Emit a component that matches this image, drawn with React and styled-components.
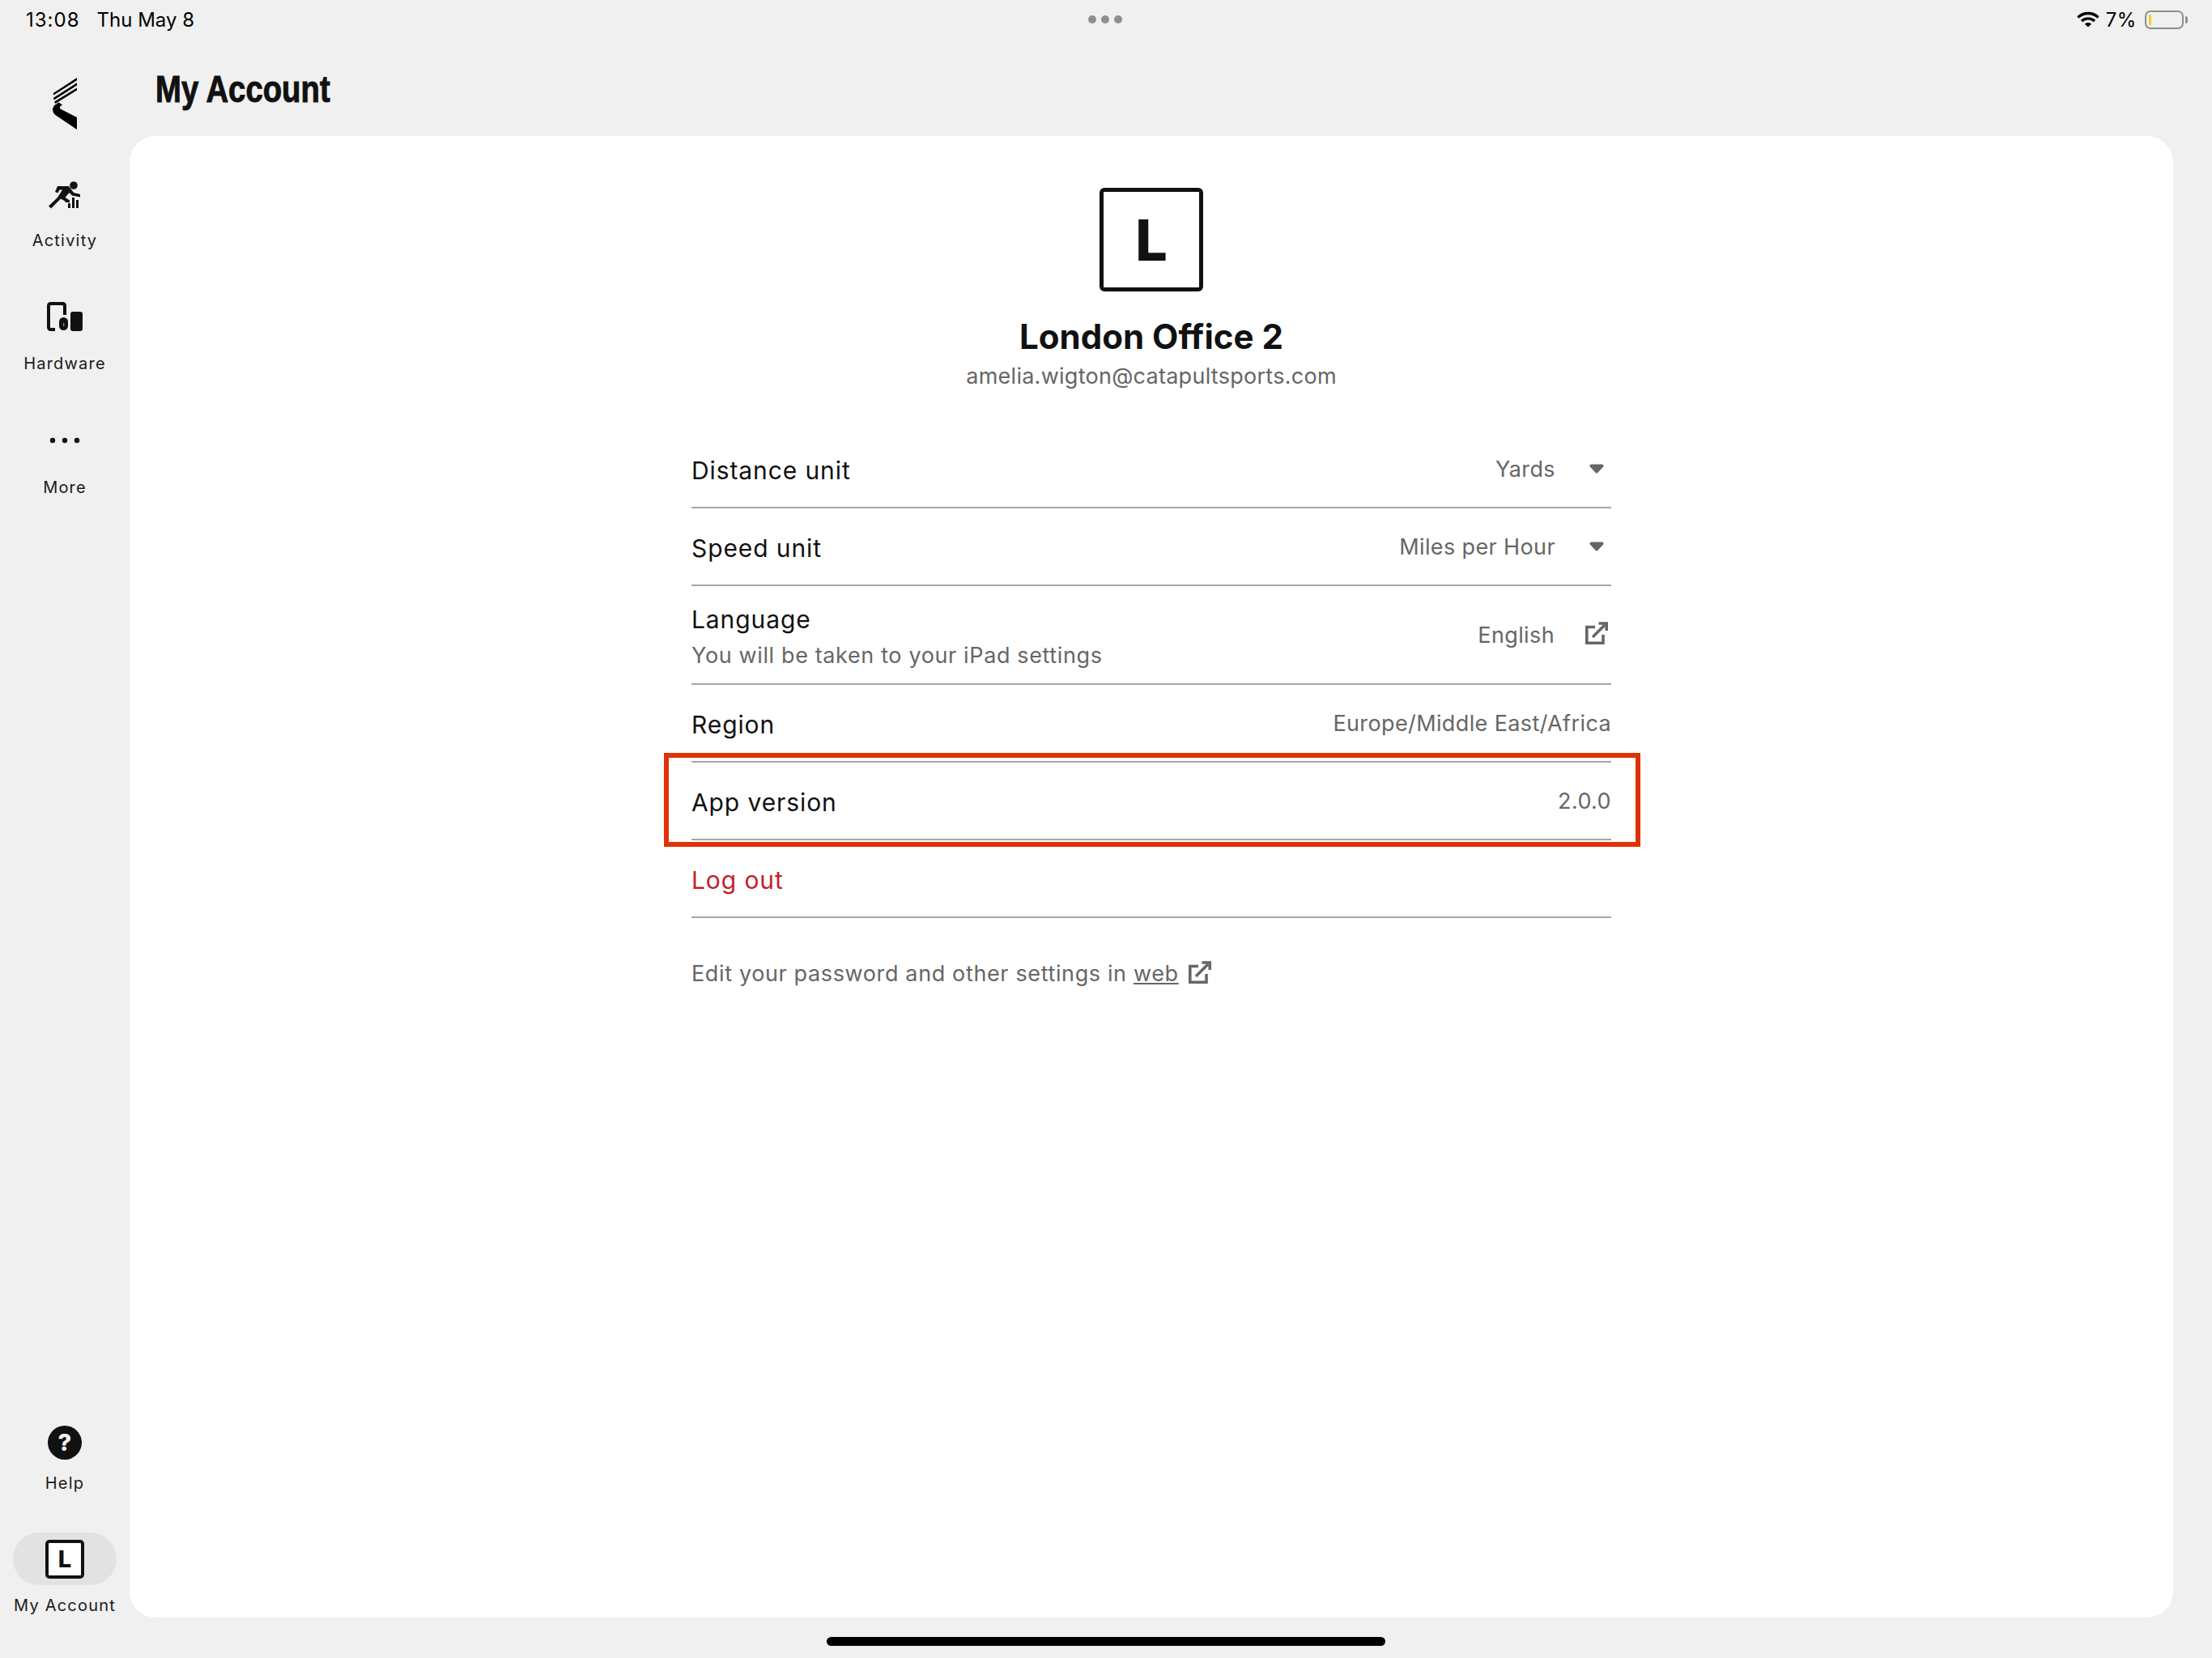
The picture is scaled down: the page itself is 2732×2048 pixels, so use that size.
import React from 'react'
import styled, { createGlobalStyle } from 'styled-components'

const GlobalStyle = createGlobalStyle`
  html, body {
    margin: 0;
    width: 2732px;
    height: 2048px;
    overflow: hidden;
    background: #f0f0f0;
    font-family: Inter, "Liberation Sans", sans-serif;
    color: #111;
  }
`

const Screen = styled.div`
  width: 2732px;
  height: 2048px;
  display: flex;
  flex-direction: column;
  background: #f0f0f0;
`

const StatusBar = styled.div`
  height: 48px;
  flex: none;
  display: grid;
  grid-template-columns: 1fr auto 1fr;
  align-items: center;
  padding: 0 35px 0 32px;
  font-size: 24px;
  color: #000;
`

const StatusLeft = styled.div`
  display: flex;
  gap: 21px;
`

const Clock = styled.span`
  letter-spacing: 1px;
`

const MultitaskDots = styled.div`
  display: flex;
  gap: 6px;
  span {
    width: 10px;
    height: 10px;
    border-radius: 50%;
    background: #8e8e8e;
  }
`

const StatusRight = styled.div`
  display: flex;
  justify-content: flex-end;
  align-items: center;
  gap: 8px;
  letter-spacing: 0.6px;
`

const Battery = styled.div`
  position: relative;
  width: 48px;
  height: 23px;
  margin-left: 2px;
  box-sizing: border-box;
  border: 2px solid #8e8e8e;
  border-radius: 7px;
  &::before {
    content: '';
    position: absolute;
    left: 3px;
    top: 3px;
    width: 3px;
    height: 13px;
    background: #f5cd2a;
    border-radius: 1px;
  }
  &::after {
    content: '';
    position: absolute;
    right: -7px;
    top: 5px;
    width: 3px;
    height: 9px;
    background: #8e8e8e;
    border-radius: 0 3px 3px 0;
  }
`

const Body = styled.div`
  flex: 1;
  display: flex;
  min-height: 0;
`

const Sidebar = styled.nav`
  width: 160px;
  flex: none;
  display: flex;
  flex-direction: column;
  justify-content: space-between;
`

const NavGroup = styled.div`
  display: flex;
  flex-direction: column;
`

const Logo = styled.svg`
  display: block;
  width: 30px;
  height: 64px;
  margin: 48px 0 60px 65px;
`

const NavItem = styled.div`
  height: ${p => p.$height || 152}px;
  display: flex;
  flex-direction: column;
  align-items: center;
`

const NavIcon = styled.div`
  height: ${p => p.$height || 48}px;
  margin-top: ${p => p.$top || 0}px;
  display: flex;
  align-items: center;
  justify-content: center;
`

const NavLabel = styled.span`
  font-size: 20px;
  line-height: 24px;
  letter-spacing: 1.2px;
  margin-top: ${p => p.$gap || 0}px;
  color: #1a1a1a;
  white-space: nowrap;
`

const Pill = styled.div`
  width: 128px;
  height: 65px;
  flex: none;
  border-radius: 33px;
  background: #e2e2e2;
  display: flex;
  align-items: center;
  justify-content: center;
`

const HelpBadge = styled.div`
  width: 42px;
  height: 42px;
  border-radius: 50%;
  background: #111;
  color: #f0f0f0;
  font-size: 29px;
  font-weight: 800;
  line-height: 42px;
  text-align: center;
`

const AvatarBox = styled.div`
  width: ${p => p.$size}px;
  height: ${p => p.$size}px;
  box-sizing: border-box;
  flex: none;
  border: ${p => p.$border}px solid #111;
  border-radius: ${p => p.$radius}px;
  background: #fff;
  display: flex;
  align-items: center;
  justify-content: center;
  font-size: ${p => p.$font}px;
  font-weight: 800;
  color: #111;
`

const Main = styled.main`
  flex: 1;
  display: flex;
  flex-direction: column;
  padding-right: 48px;
  min-width: 0;
`

const PageTitle = styled.h1`
  height: 120px;
  margin: 0;
  padding: 38px 0 0 32px;
  box-sizing: border-box;
  font-family: "Liberation Sans", sans-serif;
  font-size: 47px;
  line-height: 48px;
  font-weight: 700;
  color: #111;
  -webkit-text-stroke: 1px #111;
  transform: scaleX(0.815);
  transform-origin: 32px 0;
  white-space: nowrap;
`

const Card = styled.section`
  height: 1830px;
  background: #fff;
  border-radius: 32px;
  display: flex;
  flex-direction: column;
  align-items: center;
  padding-top: 64px;
  box-sizing: border-box;
`

const OrgName = styled.h2`
  margin: 27px 0 0;
  font-size: 42px;
  line-height: 58px;
  font-weight: 700;
  color: #111;
`

const Email = styled.div`
  font-size: 27px;
  line-height: 36px;
  letter-spacing: 0.27px;
  color: #666;
  margin-top: 2px;
`

const List = styled.div`
  width: 1136px;
  margin-top: 49px;
`

const Row = styled.div`
  position: relative;
  height: ${p => p.$height || 96}px;
  box-sizing: border-box;
  border-bottom: 2px solid #a6a6a6;
  display: flex;
  align-items: center;
  justify-content: space-between;
`

const Highlight = styled.div`
  position: absolute;
  left: -34px;
  right: -36px;
  top: -12px;
  bottom: -10px;
  border: 6px solid #e03108;
  pointer-events: none;
`

const LabelStack = styled.div`
  display: flex;
  flex-direction: column;
  gap: 8px;
  padding-top: 2px;
`

const Label = styled.div`
  padding-top: 3px;
  font-size: 30px;
  line-height: 38px;
  letter-spacing: 0.9px;
  color: ${p => (p.$danger ? '#c41e2a' : '#111')};
`

const SubLabel = styled.div`
  font-size: 27px;
  line-height: 36px;
  letter-spacing: 0.63px;
  color: #666;
`

const Value = styled.div`
  display: flex;
  align-items: center;
  gap: ${p => p.$gap || 0}px;
  font-size: 27px;
  letter-spacing: 0.38px;
  color: #666;
`

const Caret = styled.svg`
  display: block;
  width: 18px;
  height: 12px;
  margin-right: 9px;
`

const LinkIcon = styled.svg`
  display: block;
  width: 28px;
  height: 28px;
  margin: 0 4px 5px 0;
`

const Note = styled.div`
  width: 1136px;
  display: flex;
  align-items: center;
  gap: 12px;
  margin-top: 50px;
  font-size: 27px;
  line-height: 38px;
  letter-spacing: 0.63px;
  color: #666;
  a {
    color: inherit;
    text-decoration: underline;
  }
`

const HomeArea = styled.div`
  height: 50px;
  flex: none;
  display: flex;
  justify-content: center;
  padding-top: 24px;
  box-sizing: border-box;
`

const HomeBar = styled.div`
  width: 690px;
  height: 11px;
  border-radius: 6px;
  background: #000;
`

const Wifi = () => (
  <svg width="28" height="20" viewBox="0 0 28 20" fill="none" stroke="#000" strokeWidth="3.4" style={{ display: 'block' }}>
    <path d="M1.5 7.5 C8.5 0.8 19.5 0.8 26.5 7.5" />
    <path d="M6 12 C10.5 7.8 17.5 7.8 22 12" />
    <path d="M14 19.5 L9.8 15.5 C12.2 13.4 15.8 13.4 18.2 15.5 Z" fill="#000" stroke="none" />
  </svg>
)

const Catapult = () => (
  <Logo viewBox="0 0 30 64" fill="#000">
    <path d="M30 0 V3.2 L1.2 21.5 L0.6 19.2 Z" />
    <path d="M30 6.2 V9.4 L1.8 27.4 L0.8 25 Z" />
    <path d="M30 12.4 V15.6 L3.4 32 L1.8 29.8 Z" />
    <path d="M7.6 30.4 L3 33.4 C-1 36.4 -1 43 4 46.6 L30 64 V49 L10 38.8 C8.6 37.8 8.6 36 10 35 L12 33.6 Z" />
  </Logo>
)

const RunnerIcon = () => (
  <svg width="40" height="34" viewBox="0 0 40 34" style={{ display: 'block' }}>
    <circle cx="31" cy="5" r="4.8" fill="#111" />
    <path d="M8 13 L11 6 H25 L31 14 L39 16 V19.5 L29 17.5 L25.5 14 L20.5 20 L26 23.5 V26 H20.5 V24.5 L15 21.5 L3 33.5 L0 30.5 L11 20 L17 10.5 H13.5 L11.5 14.5 Z" fill="#111" />
    <rect x="24" y="27" width="3" height="6" fill="#111" />
    <rect x="29" y="20" width="3" height="13" fill="#111" />
    <rect x="34" y="23" width="3" height="10" fill="#111" />
  </svg>
)

const HardwareIcon = () => (
  <svg width="44" height="36" viewBox="0 0 44 36" style={{ display: 'block' }}>
    <path d="M10 34 H5 Q2 34 2 31 V5 Q2 2 5 2 H19 Q22 2 22 5 V16" fill="none" stroke="#111" strokeWidth="4" />
    <rect x="15" y="19" width="11" height="16" rx="5.5" fill="#111" />
    <rect x="20" y="26" width="1.4" height="4" fill="#888" />
    <rect x="29" y="12" width="15" height="24" rx="3" fill="#111" />
  </svg>
)

const MoreIcon = () => (
  <svg width="40" height="8" viewBox="0 0 40 8" style={{ display: 'block' }}>
    <circle cx="5" cy="4" r="3.2" fill="#111" />
    <circle cx="20" cy="4" r="3.2" fill="#111" />
    <circle cx="35" cy="4" r="3.2" fill="#111" />
  </svg>
)

const ExternalLink = () => (
  <LinkIcon viewBox="0 0 28 28" fill="none" stroke="#666" strokeWidth="3.6">
    <path d="M12 6.5 H1.8 V26.2 H22 V16" />
    <path d="M9 19 L24 4" />
    <path d="M16.5 2 H26.2 V11" />
  </LinkIcon>
)

const DownCaret = () => (
  <Caret viewBox="0 0 18 12">
    <path d="M2.5 2.5 H15.5 L9 9.5 Z" fill="#666" stroke="#666" strokeWidth="4" strokeLinejoin="round" />
  </Caret>
)

export default function App() {
  return (
    <Screen>
      <GlobalStyle />
      <StatusBar>
        <StatusLeft>
          <Clock>13:08</Clock>
          <span>Thu May 8</span>
        </StatusLeft>
        <MultitaskDots>
          <span />
          <span />
          <span />
        </MultitaskDots>
        <StatusRight>
          <Wifi />
          <span>7%</span>
          <Battery />
        </StatusRight>
      </StatusBar>
      <Body>
        <Sidebar>
          <NavGroup>
            <Catapult />
            <NavItem>
              <NavIcon $height={34} $top={4}><RunnerIcon /></NavIcon>
              <NavLabel $gap={27}>Activity</NavLabel>
            </NavItem>
            <NavItem>
              <NavIcon $height={36} $top={1}><HardwareIcon /></NavIcon>
              <NavLabel $gap={28}>Hardware</NavLabel>
            </NavItem>
            <NavItem>
              <NavIcon $height={36} $top={2}><MoreIcon /></NavIcon>
              <NavLabel $gap={28}>More</NavLabel>
            </NavItem>
          </NavGroup>
          <NavGroup>
            <NavItem $height={132}>
              <NavIcon $height={42}><HelpBadge>?</HelpBadge></NavIcon>
              <NavLabel $gap={17}>Help</NavLabel>
            </NavItem>
            <NavItem $height={105}>
              <Pill>
                <AvatarBox $size={48} $border={4} $radius={5} $font={29}>L</AvatarBox>
              </Pill>
              <NavLabel $gap={13}>My Account</NavLabel>
            </NavItem>
          </NavGroup>
        </Sidebar>
        <Main>
          <PageTitle>My Account</PageTitle>
          <Card>
            <AvatarBox $size={128} $border={5} $radius={6} $font={70}>L</AvatarBox>
            <OrgName>London Office 2</OrgName>
            <Email>amelia.wigton@catapultsports.com</Email>
            <List>
              <Row>
                <Label>Distance unit</Label>
                <Value $gap={42}>Yards<DownCaret /></Value>
              </Row>
              <Row>
                <Label>Speed unit</Label>
                <Value $gap={42}>Miles per Hour<DownCaret /></Value>
              </Row>
              <Row $height={122}>
                <LabelStack>
                  <Label>Language</Label>
                  <SubLabel>You will be taken to your iPad settings</SubLabel>
                </LabelStack>
                <Value $gap={38}>English<ExternalLink /></Value>
              </Row>
              <Row>
                <Label>Region</Label>
                <Value>Europe/Middle East/Africa</Value>
              </Row>
              <Row>
                <Label>App version</Label>
                <Value>2.0.0</Value>
                <Highlight />
              </Row>
              <Row>
                <Label $danger>Log out</Label>
              </Row>
            </List>
            <Note>
              <span>Edit your password and other settings in <a href="#web">web</a></span>
              <ExternalLink />
            </Note>
          </Card>
        </Main>
      </Body>
      <HomeArea>
        <HomeBar />
      </HomeArea>
    </Screen>
  )
}
